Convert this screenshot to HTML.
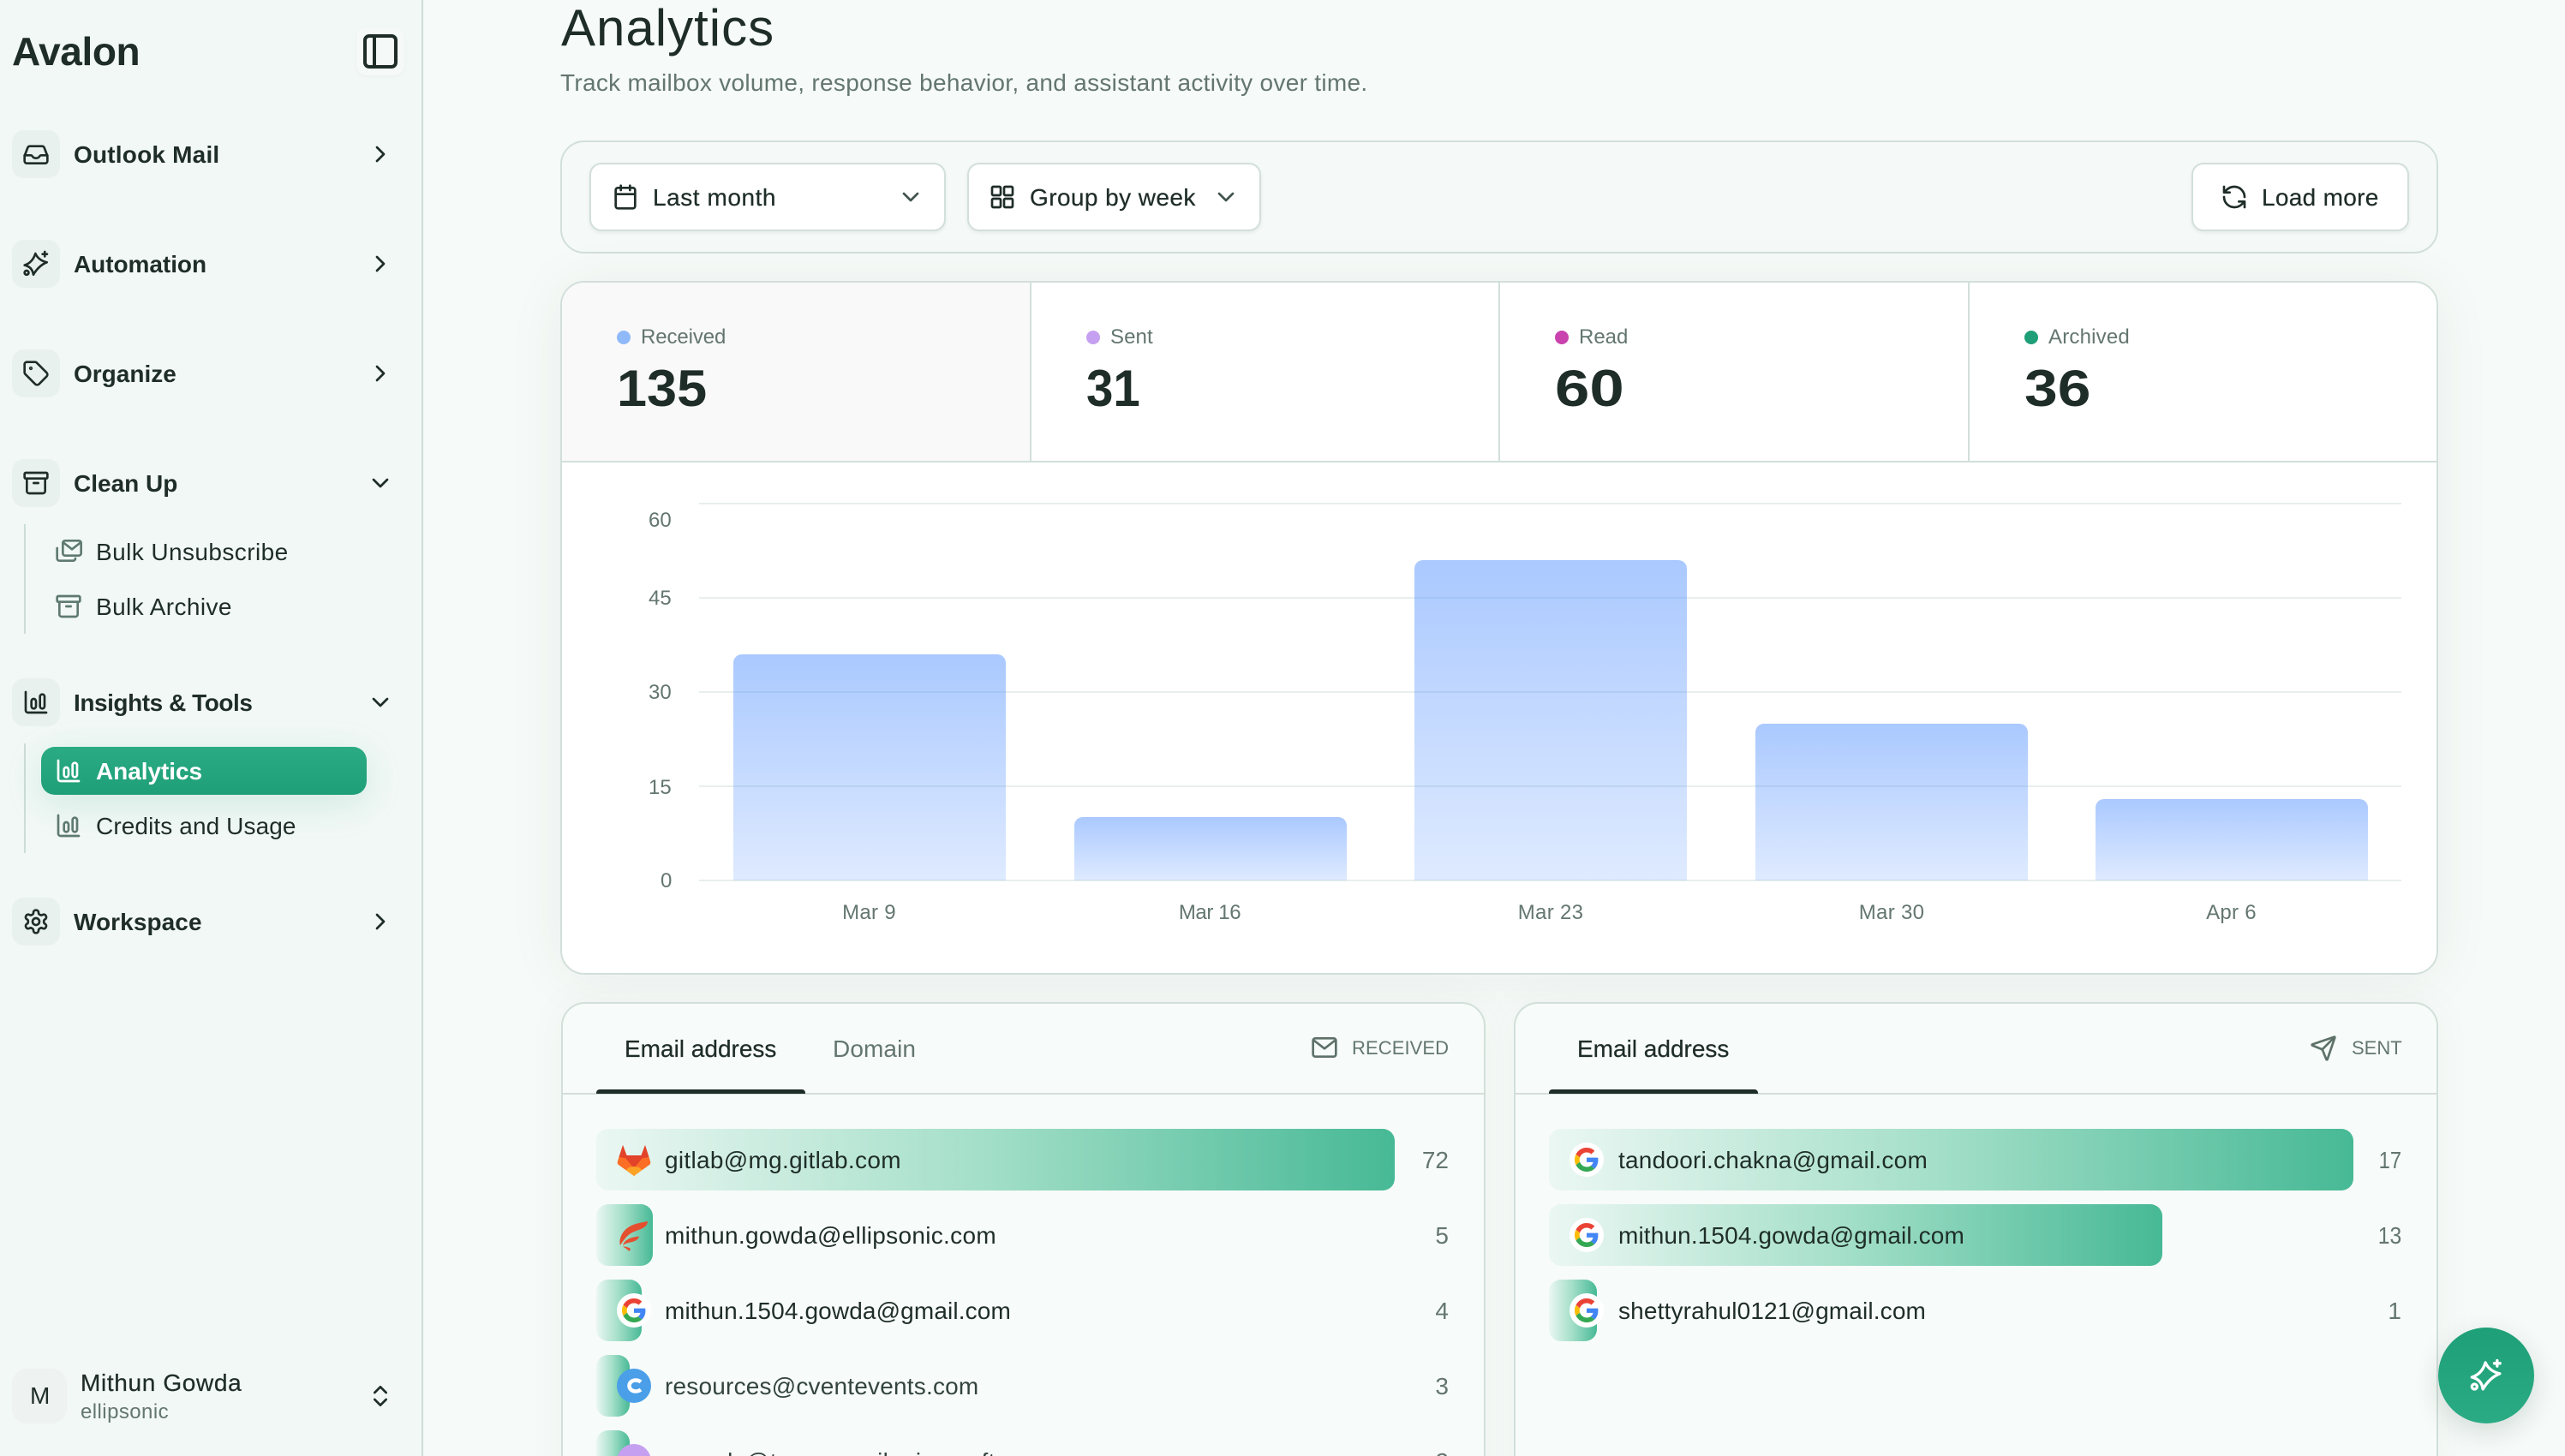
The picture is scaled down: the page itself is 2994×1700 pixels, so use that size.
<!DOCTYPE html>
<html lang="en"><head><meta charset="utf-8"><title>Analytics</title>
<style>
*{box-sizing:border-box}
html,body{margin:0;padding:0;width:2994px;height:1700px;overflow:hidden;background:#f6faf8}
body{position:relative;font-family:"Liberation Sans",sans-serif;color:#1f2d29}
.a{position:absolute}
.t{position:absolute;white-space:nowrap;font-size:28px;line-height:40px;height:40px}
.b{font-weight:700}
.m{-webkit-text-stroke:.25px currentColor}
.g{color:#63766f}
.s{font-size:24px}
svg{position:absolute;overflow:visible}
svg.i{fill:none;stroke:currentColor;stroke-width:2;stroke-linecap:round;stroke-linejoin:round}
.box{position:absolute;left:14px;width:56px;height:56px;border-radius:14px;background:#e9f1ee}
.card{position:absolute;border:2px solid #d2dfda;border-radius:28px}
.btn{position:absolute;top:190px;height:80px;background:#fff;border:2px solid #d2dfda;border-radius:14px;box-shadow:0 2px 4px rgba(31,60,50,.07)}
.bar{position:absolute;width:318px;border-radius:10px 10px 0 0;background:linear-gradient(180deg,rgba(75,140,255,.47),rgba(75,140,255,.18))}
.gl{position:absolute;left:816px;width:1987px;height:2px;background:#e8efed}
.row{position:absolute;height:72px;border-radius:14px;background:linear-gradient(90deg,#ebf7f3 0%,#a4dfc9 48%,#47b995 100%)}
.e{letter-spacing:.31px}
.c{position:absolute;white-space:nowrap;font-size:28px;line-height:40px;color:#63766f;text-align:right;transform-origin:100% 50%}
.dot{position:absolute;top:386px;width:16px;height:16px;border-radius:50%}
.n{position:absolute;top:424px;font-size:60px;line-height:60px;font-weight:700;transform-origin:0 50%;white-space:nowrap}
.w{position:absolute;width:40px;height:40px;border-radius:50%;background:#fff}
.xl{position:absolute;top:1047px;width:200px;text-align:center;font-size:24px;line-height:40px;color:#63766f;white-space:nowrap;letter-spacing:.3px}
</style></head>
<body>
<svg width="0" height="0" style="position:absolute"><defs>
<symbol id="G" viewBox="0 0 48 48"><path fill="#EA4335" d="M24 9.5c3.54 0 6.71 1.22 9.21 3.6l6.85-6.85C35.9 2.38 30.47 0 24 0 14.62 0 6.51 5.38 2.56 13.22l7.98 6.19C12.43 13.72 17.74 9.5 24 9.5z"/><path fill="#4285F4" d="M46.98 24.55c0-1.57-.15-3.09-.38-4.55H24v9.02h12.94c-.58 2.96-2.26 5.48-4.78 7.18l7.73 6c4.51-4.18 7.09-10.36 7.09-17.65z"/><path fill="#FBBC05" d="M10.53 28.59c-.5-1.45-.78-2.99-.78-4.59s.27-3.14.78-4.59l-7.98-6.19C.92 16.46 0 20.12 0 24c0 3.88.92 7.54 2.56 10.78l7.97-6.19z"/><path fill="#34A853" d="M24 48c6.48 0 11.93-2.13 15.89-5.81l-7.73-6c-2.15 1.45-4.92 2.3-8.16 2.3-6.26 0-11.57-4.22-13.47-9.91l-7.98 6.19C6.51 42.62 14.62 48 24 48z"/></symbol>
<symbol id="bars" viewBox="0 0 24 24"><path d="M3 3v16a2 2 0 0 0 2 2h16"/><rect x="8" y="9" width="4" height="8.5" rx="2"/><rect x="15.5" y="5" width="4" height="12.5" rx="2"/></symbol>
<symbol id="arch" viewBox="0 0 24 24"><rect x="2" y="3" width="20" height="5" rx="1"/><path d="M4 8v11a2 2 0 0 0 2 2h12a2 2 0 0 0 2-2V8M10 12h4"/></symbol>
<symbol id="spark" viewBox="0 0 24 24"><path d="M11.500 3Q14.200 9 21.500 10.700 14.500 13.500 9.700 21.500 8.800 14.800 2 13.200 9 11 11.500 3z"/><path d="M19.700 1.500v4M17.700 3.500h4"/><circle cx="3.800" cy="19.800" r="1.800"/></symbol>
<symbol id="cr" viewBox="0 0 24 24"><path d="m9 18 6-6-6-6"/></symbol>
<symbol id="cd" viewBox="0 0 24 24"><path d="m6 9 6 6 6-6"/></symbol>
</defs></svg>

<!-- main -->
<div class="t" style="left:655px;top:3px;font-size:60px;line-height:60px;height:60px;letter-spacing:1px">Analytics</div>
<div class="t g" style="left:654px;top:77px;letter-spacing:.3px">Track mailbox volume, response behavior, and assistant activity over time.</div>

<div class="card" style="left:654px;top:164px;width:2192px;height:132px;background:#f5f9f8"></div>
<div class="btn" style="left:688px;width:416px"></div>
<svg class="i" style="left:714px;top:214px" width="32" height="32" viewBox="0 0 24 24"><rect x="3.5" y="4" width="17" height="18" rx="2"/><path d="M16 2v4M8 2v4M3.5 9.5h17"/></svg>
<div class="t m" style="left:762px;top:211px;letter-spacing:.55px">Last month</div>
<svg class="i" style="left:1047px;top:214px;color:#42544e" width="32" height="32"><use href="#cd"/></svg>
<div class="btn" style="left:1129px;width:343px"></div>
<svg class="i" style="left:1154px;top:214px" width="32" height="32" viewBox="0 0 24 24"><rect x="3" y="3" width="7.5" height="7.5" rx="1"/><rect x="13.5" y="3" width="7.5" height="7.5" rx="1"/><rect x="3" y="13.5" width="7.5" height="7.5" rx="1"/><rect x="13.5" y="13.5" width="7.5" height="7.5" rx="1"/></svg>
<div class="t m" style="left:1202px;top:211px;letter-spacing:.42px">Group by week</div>
<svg class="i" style="left:1415px;top:214px;color:#42544e" width="32" height="32"><use href="#cd"/></svg>
<div class="btn" style="left:2558px;width:254px"></div>
<svg class="i" style="left:2592px;top:214px" width="32" height="32" viewBox="0 0 24 24"><path d="M21 12a9 9 0 0 0-9-9 9.75 9.75 0 0 0-6.74 2.74L3 8M3 3v5h5M3 12a9 9 0 0 0 9 9 9.75 9.75 0 0 0 6.74-2.74L21 16M16 16h5v5"/></svg>
<div class="t m" style="left:2640px;top:211px;letter-spacing:.3px">Load more</div>

<!-- stats + chart card -->
<div class="card" style="left:654px;top:328px;width:2192px;height:810px;background:#fff;box-shadow:0 4px 70px rgba(31,70,58,.06);overflow:hidden">
  <div class="a" style="left:0;top:0;width:546px;height:208px;background:#f9f9f9"></div>
  <div class="a" style="left:546px;top:0;width:2px;height:208px;background:#d2dfda"></div>
  <div class="a" style="left:1093px;top:0;width:2px;height:208px;background:#d2dfda"></div>
  <div class="a" style="left:1641px;top:0;width:2px;height:208px;background:#d2dfda"></div>
  <div class="a" style="left:0;top:208px;width:2192px;height:2px;background:#d2dfda"></div>
</div>
<div class="dot" style="left:720px;background:#8fb9f8"></div><div class="t s g" style="left:748px;top:374px;letter-spacing:-.1px">Received</div>
<div class="dot" style="left:1268px;background:#c6a0f0"></div><div class="t s g" style="left:1296px;top:374px;letter-spacing:.1px">Sent</div>
<div class="dot" style="left:1815px;background:#c942ae"></div><div class="t s g" style="left:1843px;top:374px">Read</div>
<div class="dot" style="left:2363px;background:#1f9f77"></div><div class="t s g" style="left:2391px;top:374px;letter-spacing:.2px">Archived</div>
<div class="n" style="left:720px;transform:scaleX(1.05)">135</div>
<div class="n" style="left:1268px;transform:scaleX(.94)">31</div>
<div class="n" style="left:1815px;transform:scaleX(1.21)">60</div>
<div class="n" style="left:2363px;transform:scaleX(1.16)">36</div>

<div class="gl" style="top:587px"></div><div class="gl" style="top:697px"></div><div class="gl" style="top:807px"></div><div class="gl" style="top:917px"></div><div class="gl" style="top:1027px"></div>
<div class="t s g" style="left:757px;top:588px">60</div>
<div class="t s g" style="left:757px;top:679px">45</div>
<div class="t s g" style="left:757px;top:789px">30</div>
<div class="t s g" style="left:757px;top:900px">15</div>
<div class="t s g" style="left:771px;top:1009px">0</div>
<div class="bar" style="left:856px;top:764px;height:264px"></div>
<div class="bar" style="left:1253.5px;top:954px;height:74px"></div>
<div class="bar" style="left:1651px;top:654px;height:374px"></div>
<div class="bar" style="left:2048.5px;top:845px;height:183px"></div>
<div class="bar" style="left:2446px;top:933px;height:95px"></div>
<div class="xl" style="left:914.5px;top:1046px">Mar 9</div>
<div class="xl" style="left:1312px;top:1046px;letter-spacing:-.4px">Mar 16</div>
<div class="xl" style="left:1710px;top:1046px">Mar 23</div>
<div class="xl" style="left:2108px;top:1046px">Mar 30</div>
<div class="xl" style="left:2504.5px;top:1046px">Apr 6</div>

<!-- left list card -->
<div class="card" style="left:655px;top:1170px;width:1079px;height:600px;background:#f7fbf9;box-shadow:0 0 50px rgba(31,70,58,.04)"></div>
<div class="a" style="left:656px;top:1276px;width:1077px;height:2px;background:#d2dfda"></div>
<div class="a" style="left:696px;top:1272px;width:244px;height:5px;background:#1f2d29;border-radius:4px 4px 0 0"></div>
<div class="t m" style="left:729px;top:1205px">Email address</div>
<div class="t g" style="left:972px;top:1205px;letter-spacing:.1px">Domain</div>
<svg class="i" style="left:1530px;top:1207px;color:#5d7169" width="32" height="32" viewBox="0 0 24 24"><rect x="2" y="4" width="20" height="16" rx="2"/><path d="m3 6 9 7 9-7"/></svg>
<div class="t g" style="left:1578px;top:1204px;font-size:22px;letter-spacing:.08px">RECEIVED</div>

<div class="row" style="left:696px;top:1318px;width:932px"></div>
<svg style="left:720px;top:1337px" width="40" height="36" viewBox="0 0 40 36"><path fill="#fc6d26" d="M7 0l4.5 12h17L33 0l6 19c.6 2-.2 3.300-1.500 4.300L20 36 2.500 23.300C1.200 22.300.4 21 1 19z"/><path fill="#e24329" d="M7 0l4.500 12h17L33 0l4.500 14-8 1.500L20 27l-9.500-11.500-8-1.500z"/><path fill="#fca326" d="M20 36l-9.500-7L14 26l6-1 6 1 3.500 3z"/><path fill="#fc6d26" d="M2.500 14l8 1.500L14 26l-3.500 3L2 23C.9 22 .5 20.800 1 19z"/><path fill="#fc6d26" d="M37.500 14l-8 1.500L26 26l3.500 3L38 23c1.100-1 1.500-2.200 1-4z"/></svg>
<div class="t e" style="left:776px;top:1335px">gitlab@mg.gitlab.com</div>
<div class="c" style="right:1303px;top:1335px">72</div>

<div class="row" style="left:696px;top:1406px;width:66px"></div>
<svg style="left:723px;top:1426px" width="33" height="35" viewBox="0 0 33 35"><path fill="#e4502f" d="M33 0c.2 4-3.500 7.500-9 9.500-7 2.400-13 4.500-18 11.500C3.500 24 2 26 1 28-1 21 3 11 12 6 19 2 26 1.500 33 0z"/><path fill="#e4502f" d="M23 17.500c-.5 3-3.500 5.500-8 6.500-4 .9-7.500 1.500-11 4C6 22 11 18.800 23 17.500z"/><path fill="#e4502f" d="M4 29.500c3-.3 7 .8 9 2.500-.5 1.400-.8 2-1.500 3C9.500 33 7 31 4 29.500z"/></svg>
<div class="t e" style="left:776px;top:1423px">mithun.gowda@ellipsonic.com</div>
<div class="c" style="right:1303px;top:1423px">5</div>

<div class="row" style="left:696px;top:1494px;width:53px"></div>
<div class="w" style="left:720px;top:1510px"></div>
<svg style="left:726px;top:1516px" width="28" height="28"><use href="#G"/></svg>
<div class="t" style="left:776px;top:1511px;letter-spacing:.13px">mithun.1504.gowda@gmail.com</div>
<div class="c" style="right:1303px;top:1511px">4</div>

<div class="row" style="left:696px;top:1582px;width:39px"></div>
<svg style="left:720px;top:1598px" width="40" height="40" viewBox="0 0 40 40"><circle cx="20" cy="20" r="20" fill="#4a9fe8"/><path d="M28 15.500c-2-1.500-4-2-6-2-4 0-7.500 2.500-7.500 6.500s3.500 6.500 7.500 6.500c2 0 4-.5 6-2" fill="none" stroke="#fff" stroke-width="4.500"/></svg>
<div class="t" style="left:776px;top:1599px;color:#33443e;letter-spacing:.2px">resources@cventevents.com</div>
<div class="c" style="right:1303px;top:1599px">3</div>

<div class="row" style="left:696px;top:1670px;width:39px"></div>
<div class="a" style="left:720px;top:1686px;width:40px;height:40px;border-radius:50%;background:#c6a0f0"></div>
<div class="t e" style="left:776px;top:1687px;color:#33443e">noreply@teams.mail.microsoft</div>
<div class="c" style="right:1303px;top:1687px">2</div>

<!-- right list card -->
<div class="card" style="left:1767px;top:1170px;width:1079px;height:600px;background:#f7fbf9;box-shadow:0 0 50px rgba(31,70,58,.04)"></div>
<div class="a" style="left:1768px;top:1276px;width:1077px;height:2px;background:#d2dfda"></div>
<div class="a" style="left:1808px;top:1272px;width:244px;height:5px;background:#1f2d29;border-radius:4px 4px 0 0"></div>
<div class="t m" style="left:1841px;top:1205px">Email address</div>
<svg class="i" style="left:2696px;top:1208px;color:#5d7169" width="32" height="32" viewBox="0 0 24 24"><path d="M14.536 21.686a.5.5 0 0 0 .937-.024l6.500-19a.496.496 0 0 0-.635-.635l-19 6.500a.5.5 0 0 0-.024.937l7.930 3.180a2 2 0 0 1 1.112 1.110z"/><path d="M21.854 2.147l-10.940 10.939"/></svg>
<div class="t g" style="left:2745px;top:1204px;font-size:22px">SENT</div>

<div class="row" style="left:1808px;top:1318px;width:939px"></div>
<div class="w" style="left:1832px;top:1334px"></div>
<svg style="left:1838px;top:1340px" width="28" height="28"><use href="#G"/></svg>
<div class="t" style="left:1889px;top:1335px;letter-spacing:.23px">tandoori.chakna@gmail.com</div>
<div class="c" style="right:191px;top:1335px;transform:scaleX(.85)">17</div>

<div class="row" style="left:1808px;top:1406px;width:716px"></div>
<div class="w" style="left:1832px;top:1422px"></div>
<svg style="left:1838px;top:1428px" width="28" height="28"><use href="#G"/></svg>
<div class="t" style="left:1889px;top:1423px;letter-spacing:.13px">mithun.1504.gowda@gmail.com</div>
<div class="c" style="right:191px;top:1423px;transform:scaleX(.88)">13</div>

<div class="row" style="left:1808px;top:1494px;width:56px"></div>
<div class="w" style="left:1832px;top:1510px"></div>
<svg style="left:1838px;top:1516px" width="28" height="28"><use href="#G"/></svg>
<div class="t" style="left:1889px;top:1511px;letter-spacing:.15px">shettyrahul0121@gmail.com</div>
<div class="c" style="right:191px;top:1511px">1</div>

<!-- fab -->
<div class="a" style="left:2846px;top:1550px;width:112px;height:112px;border-radius:50%;background:linear-gradient(180deg,#1e9f77,#2aab84);box-shadow:0 10px 30px rgba(31,70,58,.16)"></div>
<svg class="i" style="left:2882px;top:1586px;color:#fff" width="40" height="40"><use href="#spark"/></svg>

<!-- sidebar -->
<div class="a" style="left:0;top:0;width:494px;height:1700px;background:#f2f8f6;border-right:2px solid #cddcd7"></div>
<div class="t b" style="left:14px;top:35px;font-size:46px;line-height:50px;height:50px;letter-spacing:-.4px">Avalon</div>
<div class="a" style="left:416px;top:32px;width:56px;height:56px;border-radius:12px;background:#f5faf8;box-shadow:0 1px 4px rgba(31,60,50,.04)"></div>
<svg style="left:424px;top:40px" width="40" height="40" viewBox="0 0 40 40" fill="none" stroke="#1f2d29" stroke-width="4"><rect x="2" y="2" width="36" height="36" rx="5"/><path d="M13 2v36"/></svg>

<div class="box" style="top:152px"></div>
<svg class="i" style="left:26px;top:164px" width="32" height="32" viewBox="0 0 24 24"><path d="M2 13.500 4.800 6.200A2 2 0 0 1 6.700 5h10.600a2 2 0 0 1 1.900 1.200L22 13.500V18a2 2 0 0 1-2 2H4a2 2 0 0 1-2-2z"/><path d="M2 13h5.500c.7 0 1.200.6 1.600 1.200.6.900 1.600 1.300 2.900 1.300s2.300-.4 2.900-1.300c.4-.6.900-1.200 1.600-1.200H22"/></svg>
<div class="t b" style="left:86px;top:161px;letter-spacing:.2px">Outlook Mail</div>
<svg class="i" style="left:428px;top:164px" width="32" height="32"><use href="#cr"/></svg>

<div class="box" style="top:280px"></div>
<svg class="i" style="left:26px;top:292px" width="32" height="32"><use href="#spark"/></svg>
<div class="t b" style="left:86px;top:289px;letter-spacing:-.05px">Automation</div>
<svg class="i" style="left:428px;top:292px" width="32" height="32"><use href="#cr"/></svg>

<div class="box" style="top:408px"></div>
<svg class="i" style="left:26px;top:420px" width="32" height="32" viewBox="0 0 24 24"><path d="M12.586 2.586A2 2 0 0 0 11.172 2H4a2 2 0 0 0-2 2v7.172a2 2 0 0 0 .586 1.414l8.704 8.704a2.426 2.426 0 0 0 3.420 0l6.580-6.580a2.426 2.426 0 0 0 0-3.420z"/><circle cx="7.500" cy="7.500" r=".6"/></svg>
<div class="t b" style="left:86px;top:417px">Organize</div>
<svg class="i" style="left:428px;top:420px" width="32" height="32"><use href="#cr"/></svg>

<div class="box" style="top:536px"></div>
<svg class="i" style="left:26px;top:548px" width="32" height="32"><use href="#arch"/></svg>
<div class="t b" style="left:86px;top:545px">Clean Up</div>
<svg class="i" style="left:428px;top:548px" width="32" height="32"><use href="#cd"/></svg>

<div class="a" style="left:28px;top:612px;width:2px;height:128px;background:#cddcd7"></div>
<svg class="i" style="left:64px;top:628px;color:#5f7a70" width="32" height="32" viewBox="0 0 24 24"><rect x="7" y="2.500" width="16" height="13" rx="2"/><path d="m8 4.500 7 5.500 7-5.500M2 9v9a2 2 0 0 0 2 2h12a2 2 0 0 0 2-2"/></svg>
<div class="t" style="left:112px;top:625px;letter-spacing:.42px">Bulk Unsubscribe</div>
<svg class="i" style="left:64px;top:692px;color:#5f7a70" width="32" height="32"><use href="#arch"/></svg>
<div class="t" style="left:112px;top:689px;letter-spacing:.4px">Bulk Archive</div>

<div class="box" style="top:792px"></div>
<svg class="i" style="left:26px;top:804px" width="32" height="32"><use href="#bars"/></svg>
<div class="t b" style="left:86px;top:801px;letter-spacing:-.45px">Insights &amp; Tools</div>
<svg class="i" style="left:428px;top:804px" width="32" height="32"><use href="#cd"/></svg>

<div class="a" style="left:28px;top:868px;width:2px;height:128px;background:#cddcd7"></div>
<div class="a" style="left:48px;top:872px;width:380px;height:56px;border-radius:16px;background:linear-gradient(180deg,#2aab84,#1f9f77);box-shadow:0 10px 44px rgba(31,159,119,.16)"></div>
<svg class="i" style="left:64px;top:884px;color:#fff" width="32" height="32"><use href="#bars"/></svg>
<div class="t b" style="left:112px;top:881px;color:#fff;letter-spacing:-.05px">Analytics</div>
<svg class="i" style="left:64px;top:948px;color:#5f7a70" width="32" height="32"><use href="#bars"/></svg>
<div class="t" style="left:112px;top:945px;letter-spacing:.1px">Credits and Usage</div>

<div class="box" style="top:1048px"></div>
<svg class="i" style="left:26px;top:1060px" width="32" height="32" viewBox="0 0 24 24"><path d="M12.220 2h-.44a2 2 0 0 0-2 2v.18a2 2 0 0 1-1 1.730l-.43.25a2 2 0 0 1-2 0l-.15-.08a2 2 0 0 0-2.730.730l-.22.38a2 2 0 0 0 .730 2.730l.15.1a2 2 0 0 1 1 1.720v.51a2 2 0 0 1-1 1.740l-.15.09a2 2 0 0 0-.730 2.730l.22.38a2 2 0 0 0 2.730.730l.15-.08a2 2 0 0 1 2 0l.43.25a2 2 0 0 1 1 1.730V20a2 2 0 0 0 2 2h.44a2 2 0 0 0 2-2v-.18a2 2 0 0 1 1-1.730l.43-.25a2 2 0 0 1 2 0l.15.08a2 2 0 0 0 2.730-.730l.22-.39a2 2 0 0 0-.730-2.730l-.15-.08a2 2 0 0 1-1-1.740v-.5a2 2 0 0 1 1-1.740l.15-.09a2 2 0 0 0 .730-2.730l-.22-.38a2 2 0 0 0-2.730-.730l-.15.08a2 2 0 0 1-2 0l-.43-.25a2 2 0 0 1-1-1.730V4a2 2 0 0 0-2-2z"/><circle cx="12" cy="12" r="3"/></svg>
<div class="t b" style="left:86px;top:1057px;letter-spacing:.08px">Workspace</div>
<svg class="i" style="left:428px;top:1060px" width="32" height="32"><use href="#cr"/></svg>

<div class="a" style="left:14px;top:1598px;width:64px;height:64px;border-radius:18px;background:#eef2f1"></div>
<div class="t" style="left:35px;top:1610px">M</div>
<div class="t m" style="left:94px;top:1595px;letter-spacing:.65px">Mithun Gowda</div>
<div class="t s g" style="left:94px;top:1629px;letter-spacing:.43px">ellipsonic</div>
<svg class="i" style="left:428px;top:1614px" width="32" height="32" viewBox="0 0 24 24"><path d="m7 15 5 5 5-5M7 9l5-5 5 5"/></svg>
</body></html>
